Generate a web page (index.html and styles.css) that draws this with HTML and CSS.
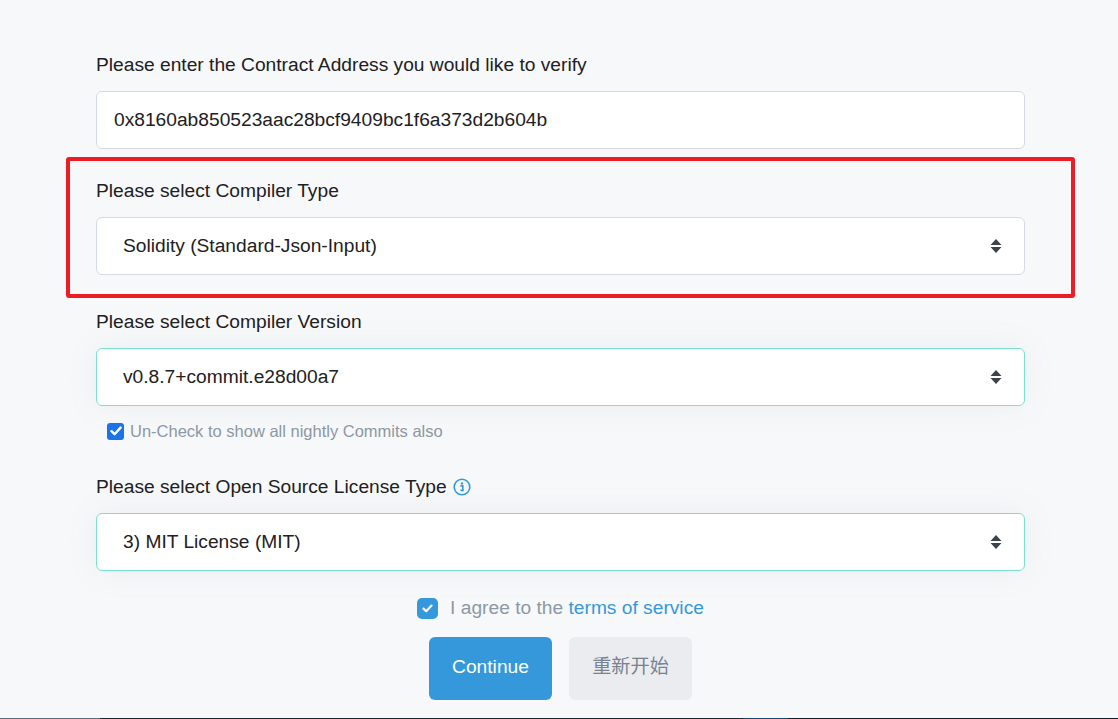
FILE: index.html
```html
<!DOCTYPE html>
<html lang="en">
<head>
<meta charset="utf-8">
<title>Verify Contract</title>
<link rel="stylesheet" href="styles.css">
</head>
<body>
<div class="page">
  <main class="form">
    <div class="group g1">
      <label class="label">Please enter the Contract Address you would like to verify</label>
      <div class="field input">0x8160ab850523aac28bcf9409bc1f6a373d2b604b</div>
    </div>

    <div class="group g2">
      <label class="label">Please select Compiler Type</label>
      <div class="field select">
        <span>Solidity (Standard-Json-Input)</span>
        <svg class="caret" width="12" height="14" viewBox="0 0 12 14"><polygon points="6,0 11.5,6 0.5,6" fill="#3d434a"/><polygon points="0.5,8 11.5,8 6,14" fill="#3d434a"/></svg>
      </div>
    </div>

    <div class="group g3">
      <label class="label">Please select Compiler Version</label>
      <div class="field select valid">
        <span>v0.8.7+commit.e28d00a7</span>
        <svg class="caret" width="12" height="14" viewBox="0 0 12 14"><polygon points="6,0 11.5,6 0.5,6" fill="#3d434a"/><polygon points="0.5,8 11.5,8 6,14" fill="#3d434a"/></svg>
      </div>
      <div class="nightly">
        <span class="cb-native"><svg width="12" height="10" viewBox="0 0 12 10"><path d="M1.5 5.2 L4.6 8.2 L10.6 1.6" fill="none" stroke="#fff" stroke-width="2.4" stroke-linecap="round" stroke-linejoin="round"/></svg></span>
        <span>Un-Check to show all nightly Commits also</span>
      </div>
    </div>

    <div class="group g4">
      <label class="label">Please select Open Source License Type
        <svg class="info" width="18" height="18" viewBox="0 0 18 18"><circle cx="9" cy="9" r="7.8" fill="none" stroke="#3498db" stroke-width="1.6"/><circle cx="9" cy="5.4" r="1.2" fill="#3498db"/><path d="M7.4 7.9 H9.8 V12.4 H10.8 M7.4 12.4 H10.8" fill="none" stroke="#3498db" stroke-width="1.6"/></svg>
      </label>
      <div class="field select valid">
        <span>3) MIT License (MIT)</span>
        <svg class="caret" width="12" height="14" viewBox="0 0 12 14"><polygon points="6,0 11.5,6 0.5,6" fill="#3d434a"/><polygon points="0.5,8 11.5,8 6,14" fill="#3d434a"/></svg>
      </div>
    </div>

    <div class="agree">
      <span class="cb-custom"><svg width="11" height="9" viewBox="0 0 11 9"><path d="M1.5 4.6 L4.2 7.2 L9.5 1.6" fill="none" stroke="#fff" stroke-width="2.2" stroke-linecap="round" stroke-linejoin="round"/></svg></span>
      <span class="agree-text">I agree to the <a class="link">terms of service</a></span>
    </div>

    <div class="actions">
      <button class="btn primary">Continue</button>
      <button class="btn secondary">重新开始</button>
    </div>
  </main>
  <footer class="footer"><span class="f1"></span><span class="f2"></span><span class="f3"></span><span class="f4"></span></footer>
  <div class="highlight"></div>
</div>
</body>
</html>
```

FILE: styles.css
```css
* { box-sizing: border-box; }
html, body { margin: 0; padding: 0; }
body {
  background: #f7f8fa;
  font-family: "Liberation Sans", Arial, "Noto Sans CJK SC", sans-serif;
  color: #1e2022;
  height: 719px;
  overflow: hidden;
}
.page { position: relative; }
.form {
  width: 929px;
  margin-left: 96px;
  padding-top: 51px;
  padding-bottom: 18px;
}
.label {
  display: block;
  font-size: 19.2px;
  line-height: 27px;
  margin-bottom: 13px;
  color: #1e2022;
}
.info { vertical-align: -3px; margin-left: 1px; }
.group.g2 { margin-top: 28px; }
.group.g3 { margin-top: 33px; }
.group.g4 { margin-top: 30px; }
.field {
  height: 58px;
  background: #fff;
  border: 1px solid #d5dae2;
  border-radius: 6px;
  font-size: 19.2px;
  color: #1e2022;
  display: flex;
  align-items: center;
}
.input { padding-left: 17px; }
.select {
  padding-left: 26px;
  padding-right: 22px;
  justify-content: space-between;
}
.select.valid {
  border-color: #79e2cf;
  box-shadow: 0 0 30px rgba(110, 150, 150, 0.10);
}
.nightly {
  margin-top: 13px;
  height: 24px;
  display: flex;
  align-items: center;
  padding-left: 11px;
  font-size: 16.5px;
  color: #8c98a4;
}
.cb-native {
  width: 17px;
  height: 17px;
  border-radius: 3px;
  background: #1a73e8;
  display: inline-flex;
  align-items: center;
  justify-content: center;
  margin-right: 6px;
}
.agree {
  margin-top: 23px;
  height: 28px;
  display: flex;
  align-items: center;
  justify-content: center;
}
.cb-custom {
  width: 21px;
  height: 21px;
  border-radius: 5px;
  background: #3498db;
  display: inline-flex;
  align-items: center;
  justify-content: center;
  margin-right: 12px;
}
.agree-text {
  font-size: 19.2px;
  color: #8c98a4;
}
.link { color: #3498db; text-decoration: none; }
.actions {
  margin-top: 15px;
  display: flex;
  justify-content: center;
  gap: 17px;
}
.btn {
  width: 123px;
  height: 63px;
  border: none;
  border-radius: 6px;
  font-family: "Liberation Sans", Arial, "Noto Sans CJK SC", sans-serif;
  font-size: 19.2px;
  line-height: 1;
  padding: 0 0 3px;
}
.primary { background: #3498db; color: #fff; }
.secondary { background: #ebecef; color: #77838f; }
.footer {
  display: flex;
  height: 1px;
  background: #13262d;
}
.f1 { width: 100px; background: #5b6b77; }
.f2 { width: 643px; background: #14292e; }
.f3 { width: 45px; background: #0f4a78; }
.f4 { flex: 1; background: #161f2a; }
.highlight {
  position: absolute;
  left: 66px;
  top: 157px;
  width: 1009px;
  height: 141px;
  border: 4px solid #ec1c26;
  border-radius: 3px;
  pointer-events: none;
}
```
